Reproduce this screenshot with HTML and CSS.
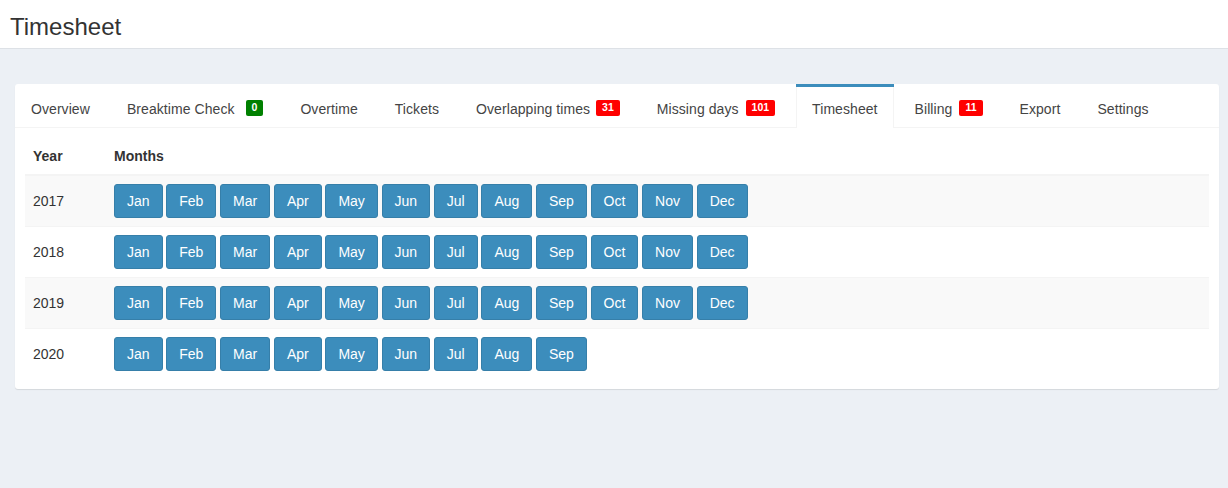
FILE: index.html
```html
<!DOCTYPE html>
<html>
<head>
<meta charset="utf-8">
<title>Timesheet</title>
<link rel="stylesheet" href="styles.css">
</head>
<body>
<header class="page-header">
  <h1 class="page-title">Timesheet</h1>
</header>
<main class="content">
  <div class="tabs-box">
    <ul class="nav-tabs">
      <li class="tab"><a>Overview</a></li>
      <li class="tab"><a>Breaktime Check<span class="label label-green gap-wide">0</span></a></li>
      <li class="tab"><a>Overtime</a></li>
      <li class="tab"><a>Tickets</a></li>
      <li class="tab"><a>Overlapping times<span class="label label-red gap-narrow">31</span></a></li>
      <li class="tab"><a>Missing days<span class="label label-red gap-mid">101</span></a></li>
      <li class="tab active"><a>Timesheet</a></li>
      <li class="tab"><a>Billing<span class="label label-red gap-mid">11</span></a></li>
      <li class="tab"><a>Export</a></li>
      <li class="tab"><a>Settings</a></li>
    </ul>
    <div class="tab-content">
      <table class="table">
        <thead>
          <tr><th class="col-year">Year</th><th>Months</th></tr>
        </thead>
        <tbody>
          <tr>
            <td>2017</td>
            <td><div class="months"><a class="btn">Jan</a><a class="btn">Feb</a><a class="btn">Mar</a><a class="btn">Apr</a><a class="btn">May</a><a class="btn">Jun</a><a class="btn">Jul</a><a class="btn">Aug</a><a class="btn">Sep</a><a class="btn">Oct</a><a class="btn">Nov</a><a class="btn">Dec</a></div></td>
          </tr>
          <tr>
            <td>2018</td>
            <td><div class="months"><a class="btn">Jan</a><a class="btn">Feb</a><a class="btn">Mar</a><a class="btn">Apr</a><a class="btn">May</a><a class="btn">Jun</a><a class="btn">Jul</a><a class="btn">Aug</a><a class="btn">Sep</a><a class="btn">Oct</a><a class="btn">Nov</a><a class="btn">Dec</a></div></td>
          </tr>
          <tr>
            <td>2019</td>
            <td><div class="months"><a class="btn">Jan</a><a class="btn">Feb</a><a class="btn">Mar</a><a class="btn">Apr</a><a class="btn">May</a><a class="btn">Jun</a><a class="btn">Jul</a><a class="btn">Aug</a><a class="btn">Sep</a><a class="btn">Oct</a><a class="btn">Nov</a><a class="btn">Dec</a></div></td>
          </tr>
          <tr>
            <td>2020</td>
            <td><div class="months"><a class="btn">Jan</a><a class="btn">Feb</a><a class="btn">Mar</a><a class="btn">Apr</a><a class="btn">May</a><a class="btn">Jun</a><a class="btn">Jul</a><a class="btn">Aug</a><a class="btn">Sep</a></div></td>
          </tr>
        </tbody>
      </table>
    </div>
  </div>
</main>
</body>
</html>
```

FILE: styles.css
```css
* { box-sizing: border-box; }
html, body { margin: 0; padding: 0; }
body {
  background: #ecf0f5;
  font-family: "Liberation Sans", Arial, sans-serif;
  font-size: 14px;
  line-height: 20px;
  color: #333;
  height: 488px;
  overflow: hidden;
}
.page-header {
  background: #fff;
  height: 49px;
  border-bottom: 1px solid #dde1e6;
  padding: 14px 10px 0;
}
.page-title {
  margin: 0;
  font-size: 24px;
  font-weight: normal;
  line-height: 26px;
  color: #333;
}
.content { padding: 35px 9px 0 15px; }
.tabs-box {
  background: #fff;
  border-radius: 3px;
  box-shadow: 0 1px 1px rgba(0,0,0,0.1);
}
.nav-tabs {
  list-style: none;
  margin: 0;
  padding: 0;
  display: flex;
  border-bottom: 1px solid #f4f4f4;
  height: 44px;
}
.tab {
  border-top: 3px solid transparent;
  margin-right: 5px;
  height: 44px;
}
.tab a {
  display: block;
  padding: 12px 15px 8px;
  border: 1px solid transparent;
  border-top: 0;
  border-bottom: 0;
  color: #444;
  line-height: 20px;
  height: 40px;
  white-space: nowrap;
  letter-spacing: 0.07px;
}
.tab.active { border-top-color: #3c8dbc; }
.tab.active a {
  border-left-color: #f4f4f4;
  border-right-color: #f4f4f4;
  background: #fff;
  height: 41px;
  position: relative;
}
.label {
  display: inline-block;
  font-size: 10.5px;
  font-weight: bold;
  line-height: 1;
  padding: 2px 6px 3px;
  border-radius: 2px;
  color: #fff;
  vertical-align: 3px;
  letter-spacing: 0;
}
.label-green { background: #008000; }
.label-red { background: #ff0000; }
.gap-wide { margin-left: 11px; }
.gap-mid { margin-left: 7px; }
.gap-narrow { margin-left: 6px; }
.tab-content { padding: 10px; }
.table {
  width: 100%;
  border-collapse: collapse;
  border-spacing: 0;
}
.table th {
  text-align: left;
  font-weight: bold;
  padding: 8px;
  border-bottom: 2px solid #f4f4f4;
}
.col-year { width: 81px; }
.table td {
  padding: 8px;
  border-top: 1px solid #f4f4f4;
  vertical-align: middle;
}
.table tbody tr:nth-child(odd) { background: #f9f9f9; }
.months {
  display: flex;
  gap: 3.7px;
}
.btn {
  display: inline-block;
  padding: 6px 12px;
  background: #3c8dbc;
  border: 1px solid #367fa9;
  border-radius: 3px;
  color: #fff;
  line-height: 20px;
  font-size: 14px;
  text-align: center;
}
```
